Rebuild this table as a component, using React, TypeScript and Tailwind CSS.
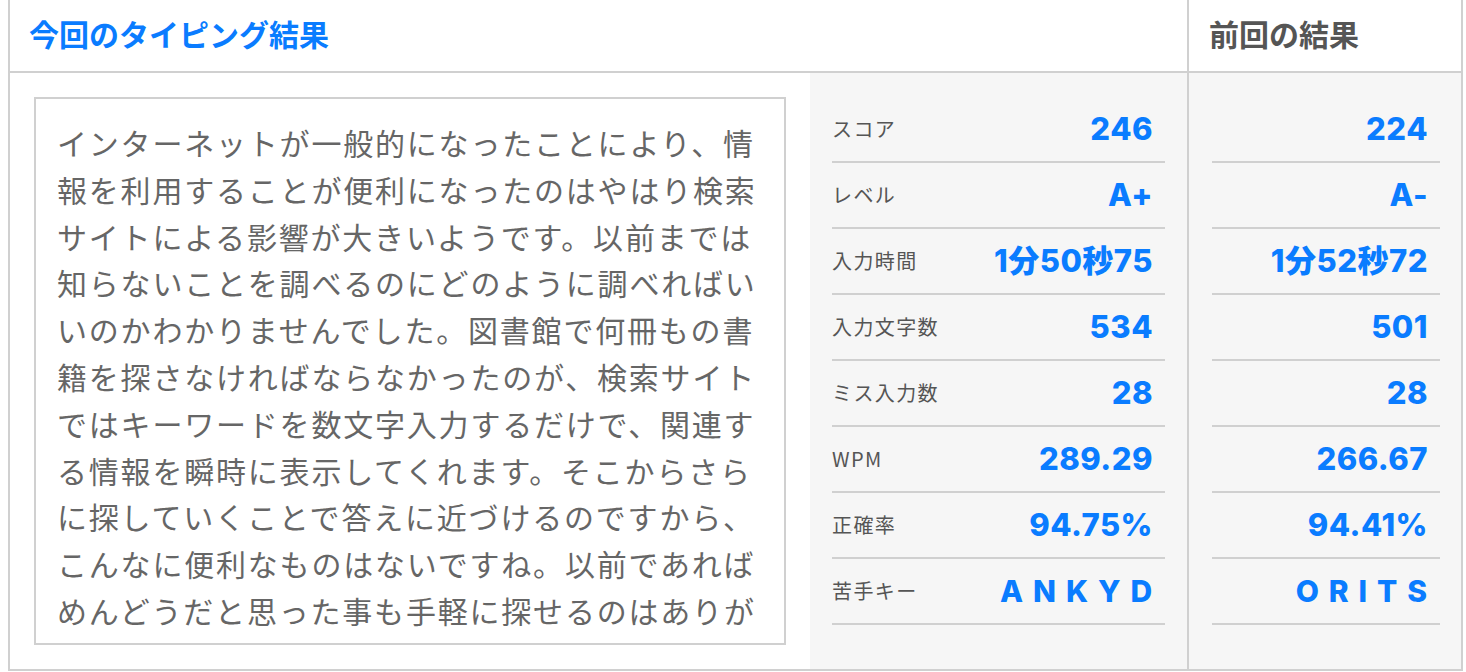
const bodyText =
  "インターネットが一般的になったことにより、情報を利用することが便利になったのはやはり検索サイトによる影響が大きいようです。以前までは知らないことを調べるのにどのように調べればいいのかわかりませんでした。図書館で何冊もの書籍を探さなければならなかったのが、検索サイトではキーワードを数文字入力するだけで、関連する情報を瞬時に表示してくれます。そこからさらに探していくことで答えに近づけるのですから、こんなに便利なものはないですね。以前であればめんどうだと思った事も手軽に探せるのはありがたいことです。";

const labels = ["スコア", "レベル", "入力時間", "入力文字数", "ミス入力数", "WPM", "正確率", "苦手キー"];
const current = ["246", "A+", "1分50秒75", "534", "28", "289.29", "94.75%", "ANKYD"];
const previous = ["224", "A-", "1分52秒72", "501", "28", "266.67", "94.41%", "ORITS"];

const Value = ({ value, isKeys }: { value: string; isKeys: boolean }) =>
  isKeys ? (
    <span className="pr-[3px] text-[30px] font-extrabold tracking-[0.33em] text-[#0a7cff] font-['Inter','Noto_Sans_CJK_JP',sans-serif]">
      {value}
    </span>
  ) : (
    <span className="pr-[12px] text-[31px] font-extrabold tracking-[0.5px] text-[#0a7cff] font-['Inter','Noto_Sans_CJK_JP',sans-serif]">
      {value}
    </span>
  );

export default function App() {
  return (
    <div className="bg-white min-h-screen font-['Liberation_Sans','Noto_Sans_CJK_JP',sans-serif]">
      <div className="ml-[8px] flex w-[1455px] border-x-2 border-b-2 border-[#d0d0d0]">
        {/* this time */}
        <div className="flex w-[1179px] flex-col border-r-2 border-[#d0d0d0]">
          <div className="flex h-[73px] items-center border-b-2 border-[#d0d0d0] pl-[19px]">
            <h2 className="text-[30px] font-bold text-[#0a7cff]">今回のタイピング結果</h2>
          </div>
          <div className="flex">
            <div className="w-[800px] pl-[24px] pt-[24px] pb-[24px]">
              <div className="h-[548px] w-[752px] overflow-hidden border-2 border-[#d0d0d0] px-[21px] pt-[20px]">
                <p className="text-[30px] leading-[46.8px] tracking-[1.8px] text-[#666] font-['Noto_Sans_CJK_JP',sans-serif]">
                  {bodyText}
                </p>
              </div>
            </div>
            <div className="flex-1 bg-[#f6f6f6] px-[22px] pt-[24px]">
              {labels.map((label, i) => (
                <div
                  key={label}
                  className="flex h-[66px] items-center justify-between border-b-2 border-[#d0d0d0]"
                >
                  <span className="text-[20px] tracking-[0.07em] text-[#555] font-['Noto_Sans_CJK_JP',sans-serif]">
                    {label}
                  </span>
                  <Value value={current[i]} isKeys={i === 7} />
                </div>
              ))}
            </div>
          </div>
        </div>

        {/* previous */}
        <div className="flex flex-1 flex-col">
          <div className="flex h-[73px] items-center border-b-2 border-[#d0d0d0] pl-[20px]">
            <h2 className="text-[30px] font-bold text-[#555]">前回の結果</h2>
          </div>
          <div className="flex-1 bg-[#f6f6f6] pl-[23px] pr-[21px] pt-[24px]">
            {previous.map((v, i) => (
              <div
                key={labels[i]}
                className="flex h-[66px] items-center justify-end border-b-2 border-[#d0d0d0]"
              >
                <Value value={v} isKeys={i === 7} />
              </div>
            ))}
          </div>
        </div>
      </div>
    </div>
  );
}
